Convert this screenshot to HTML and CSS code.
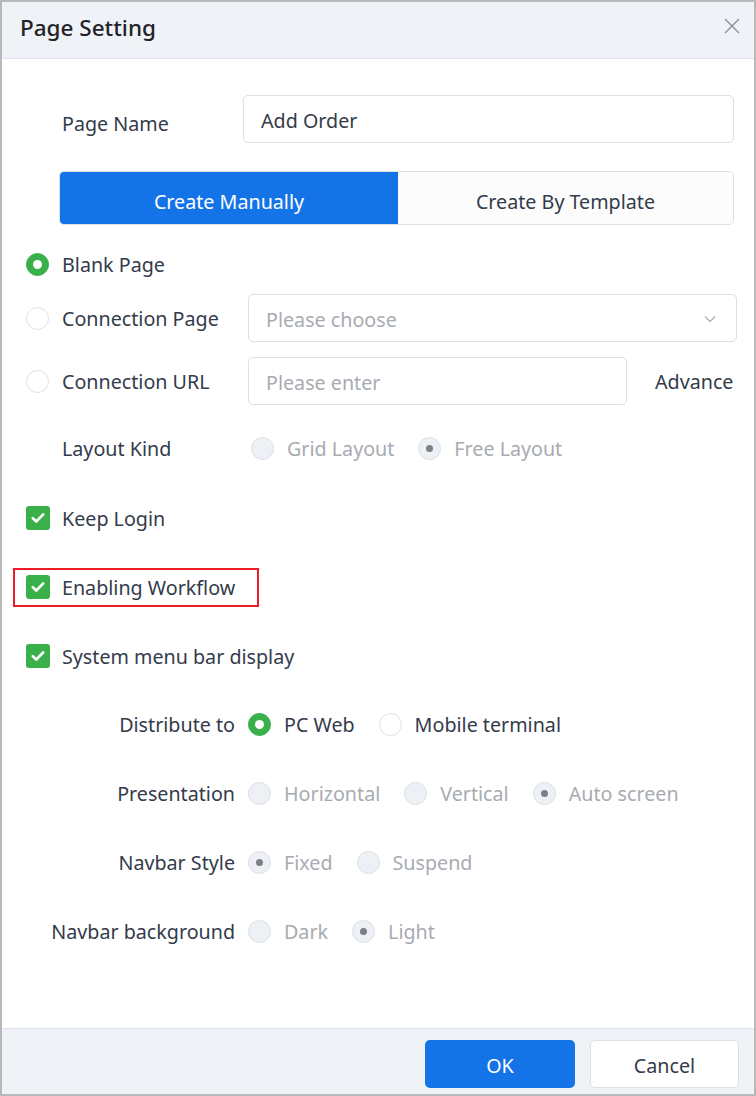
FILE: index.html
```html
<!DOCTYPE html>
<html>
<head>
<meta charset="utf-8">
<link rel="stylesheet" href="styles.css">
</head>
<body>
<div class="dialog">
  <div class="header">
    <div class="title">Page Setting</div>
    <svg class="close" width="16" height="16" viewBox="0 0 16 16"><path d="M1 1L15 15M15 1L1 15" stroke="#8a8f99" stroke-width="1.4" fill="none"/></svg>
  </div>
  <div class="content">
    <div class="row row-name">
      <div class="lbl lbl-name">Page Name</div>
      <div class="input input-name">Add Order</div>
    </div>
    <div class="seg">
      <div class="seg-item active">Create Manually</div>
      <div class="seg-item">Create By Template</div>
    </div>
    <div class="row row-radio r-blank">
      <span class="radio on"></span><span class="rlbl">Blank Page</span>
    </div>
    <div class="row row-radio r-conn">
      <span class="radio"></span><span class="rlbl wide">Connection Page</span>
      <div class="input select ph">Please choose
        <svg class="chev" width="12" height="8" viewBox="0 0 12 8"><path d="M1 1.5L6 6.5L11 1.5" stroke="#a8abb2" stroke-width="1.2" fill="none"/></svg>
      </div>
    </div>
    <div class="row row-radio r-url">
      <span class="radio"></span><span class="rlbl wide">Connection URL</span>
      <div class="input url ph">Please enter</div>
      <span class="advance">Advance</span>
    </div>
    <div class="row r-layout">
      <span class="lbl layout-lbl">Layout Kind</span>
      <span class="opt"><span class="radio dis"></span><span class="dtxt">Grid Layout</span></span>
      <span class="opt"><span class="radio dis don"></span><span class="dtxt">Free Layout</span></span>
    </div>
    <div class="row row-check r-keep">
      <span class="check"><svg width="14" height="12" viewBox="0 0 14 12"><path d="M1.8 6.2L5.3 9.5L12.2 2.4" stroke="#fff" stroke-width="2.6" fill="none" stroke-linecap="round" stroke-linejoin="round"/></svg></span><span class="clbl">Keep Login</span>
    </div>
    <div class="row row-check r-flow">
      <span class="mark">
        <span class="check"><svg width="14" height="12" viewBox="0 0 14 12"><path d="M1.8 6.2L5.3 9.5L12.2 2.4" stroke="#fff" stroke-width="2.6" fill="none" stroke-linecap="round" stroke-linejoin="round"/></svg></span><span class="clbl">Enabling Workflow</span>
      </span>
    </div>
    <div class="row row-check r-sys">
      <span class="check"><svg width="14" height="12" viewBox="0 0 14 12"><path d="M1.8 6.2L5.3 9.5L12.2 2.4" stroke="#fff" stroke-width="2.6" fill="none" stroke-linecap="round" stroke-linejoin="round"/></svg></span><span class="clbl">System menu bar display</span>
    </div>
    <div class="row sub r-dist">
      <span class="slbl">Distribute to</span>
      <span class="opt"><span class="radio on"></span><span class="otxt">PC Web</span></span>
      <span class="opt"><span class="radio"></span><span class="otxt">Mobile terminal</span></span>
    </div>
    <div class="row sub r-pres">
      <span class="slbl">Presentation</span>
      <span class="opt"><span class="radio dis"></span><span class="dtxt">Horizontal</span></span>
      <span class="opt"><span class="radio dis"></span><span class="dtxt">Vertical</span></span>
      <span class="opt"><span class="radio dis don"></span><span class="dtxt">Auto screen</span></span>
    </div>
    <div class="row sub r-nav">
      <span class="slbl">Navbar Style</span>
      <span class="opt"><span class="radio dis don"></span><span class="dtxt">Fixed</span></span>
      <span class="opt"><span class="radio dis"></span><span class="dtxt">Suspend</span></span>
    </div>
    <div class="row sub r-bg">
      <span class="slbl">Navbar background</span>
      <span class="opt"><span class="radio dis"></span><span class="dtxt">Dark</span></span>
      <span class="opt"><span class="radio dis don"></span><span class="dtxt">Light</span></span>
    </div>
  </div>
  <div class="footer">
    <div class="btn ok">OK</div>
    <div class="btn cancel">Cancel</div>
  </div>
</div>
</body>
</html>
```
FILE: styles.css
```css
* { box-sizing: border-box; }
html, body { margin: 0; padding: 0; background: #fff; }
body { font-family: "Noto Sans", "Open Sans", sans-serif; color: #343b4a; font-size: 19.7px; }
.dialog {
  width: 756px; height: 1096px;
  border: 2px solid #b9b9b9;
  display: flex; flex-direction: column;
  background: #fff;
}
.header {
  height: 57px; flex: none;
  background: #eff2f7;
  border-bottom: 1px solid #dfe3ea;
  display: flex; align-items: center; justify-content: space-between;
  padding: 0 14px 0 18px;
}
.title { font-size: 22.5px; font-weight: 500; color: #1f2329; margin-top: -5px; }
.close { margin-top: -8px; }
.content { flex: 1; position: relative; }
.row { display: flex; align-items: center; height: 48px; }
.row-name { margin-top: 36px; padding-left: 60px; padding-right: 20px; }
.lbl-name { width: 181px; padding-top: 8px; }
.input {
  height: 48px; border: 1px solid #dcdfe6; border-radius: 5px;
  display: flex; align-items: center; padding: 3px 0 0 17px;
  background: #fff; color: #343b4a;
}
.input-name { flex: 1; }
.ph { color: #a8abb2; }
.seg {
  margin: 28px 20px 0 57px; height: 54px;
  display: flex; border: 1px solid #dcdfe6; border-radius: 5px; overflow: hidden;
}
.seg-item { flex: 1; display: flex; align-items: center; justify-content: center; background: #fcfcfd; color: #343b4a; padding-top: 6px; }
.seg-item.active { background: #1473e6; color: #fff; flex: 0 0 338px; }
.row-radio { padding-left: 24px; }
.r-blank { margin-top: 15px; }
.r-conn { margin-top: 6px; padding-right: 17px; }
.r-url { margin-top: 15px; }
.radio {
  width: 23px; height: 23px; border-radius: 50%;
  border: 1px solid #dcdfe6; background: #fff; flex: none;
  display: inline-flex; align-items: center; justify-content: center;
}
.radio.on { background: #39b04a; border-color: #39b04a; }
.radio.on::after { content: ""; width: 9px; height: 9px; border-radius: 50%; background: #fff; }
.radio.dis { background: #edf0f4; border-color: #dcdfe6; }
.radio.don::after { content: ""; width: 7px; height: 7px; border-radius: 50%; background: #7b7f87; }
.rlbl { margin-left: 13px; }
.rlbl.wide { width: 186px; }
.select { flex: 1; position: relative; }
.chev { position: absolute; right: 20px; top: 20px; }
.url { width: 379px; }
.advance { margin-left: 28px; }
.r-layout { margin-top: 19px; padding-left: 60px; }
.layout-lbl { width: 189px; }
.opt { display: inline-flex; align-items: center; margin-right: 24px; }
.dtxt { color: #a8abb2; margin-left: 13px; }
.otxt { margin-left: 13px; }
.row-check { padding-left: 24px; margin-top: 21px; }
.r-keep { margin-top: 22px; }
.check {
  width: 24px; height: 24px; border-radius: 3px; background: #39b04a; flex: none;
  display: inline-flex; align-items: center; justify-content: center;
}
.clbl { margin-left: 12px; }
.r-flow { padding-left: 11px; }
.mark {
  display: inline-flex; align-items: center;
  border: 2px solid #ee1c25; height: 39px; width: 246px; padding-left: 11px;
}
.sub { margin-top: 20px; }
.r-pres, .r-nav, .r-bg { margin-top: 21px; }
.slbl { width: 233px; text-align: right; margin-right: 13px; }
.footer {
  height: 66px; flex: none;
  background: #eff2f7; border-top: 1px solid #dfe3ea;
  display: flex; align-items: center; justify-content: flex-end;
  padding: 5px 15px 0 0; gap: 15px;
}
.btn {
  width: 150px; height: 48px; border-radius: 5px;
  display: flex; align-items: center; justify-content: center; padding-top: 3px;
}
.ok { background: #1473e6; color: #fff; }
.cancel { background: #fff; border: 1px solid #dcdfe6; color: #343b4a; width: 149px; }
```
